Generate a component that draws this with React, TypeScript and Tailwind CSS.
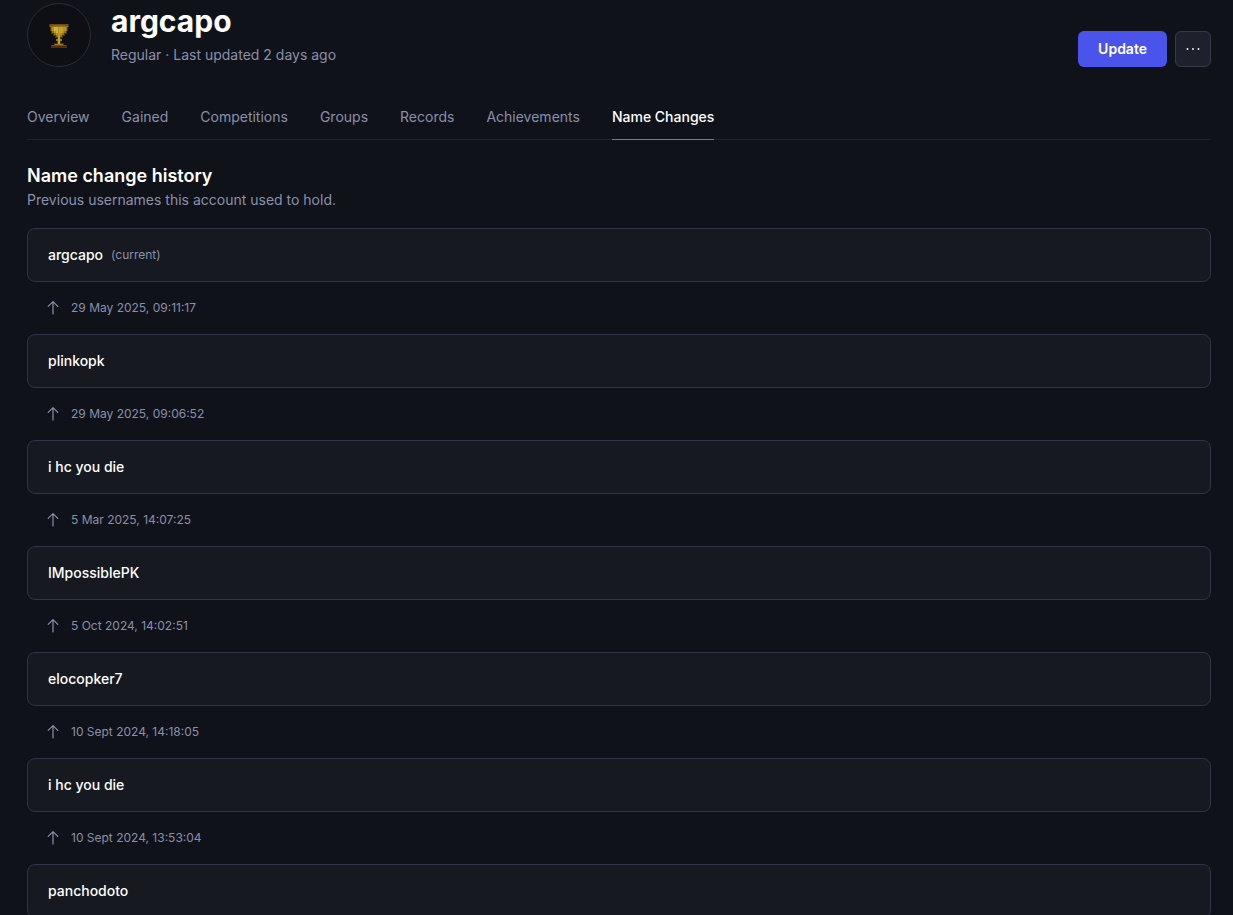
const TABS = [
  'Overview',
  'Gained',
  'Competitions',
  'Groups',
  'Records',
  'Achievements',
  'Name Changes',
];

interface NameEntry {
  name: string;
  changedAt?: string;
}

// Newest first, changedAt is when the name above replaced this one
const HISTORY: NameEntry[] = [
  { name: 'argcapo' },
  { name: 'plinkopk', changedAt: '29 May 2025, 09:11:17' },
  { name: 'i hc you die', changedAt: '29 May 2025, 09:06:52' },
  { name: 'IMpossiblePK', changedAt: '5 Mar 2025, 14:07:25' },
  { name: 'elocopker7', changedAt: '5 Oct 2024, 14:02:51' },
  { name: 'i hc you die', changedAt: '10 Sept 2024, 14:18:05' },
  { name: 'panchodoto', changedAt: '10 Sept 2024, 13:53:04' },
];

function TrophyIcon() {
  return (
    <svg width="20" height="24" viewBox="0 0 20 24" className="mt-0.5" shapeRendering="crispEdges" aria-hidden="true">
      {/* dark outline */}
      <path fill="#4a3510" d="M0 0h20v3h-1v4h-1v3h-2v2h-2v2h-2v5h3v2h3v3H2v-3h3v-2h3v-5H6v-2H4v-2H2V7H1V3H0z" />
      {/* cup */}
      <path fill="#8f7118" d="M1 1h18v2h-1v4h-1v2h-2v2h-2v2h-2v6H9v-6H7v-2H5V9H3V7H2V3H1z" />
      <path fill="#b39224" d="M3 3h14v4h-2v2h-2v2h-2v2H9v-2H7V9H5V7H3z" />
      <path fill="#d0b03c" d="M5 3h4v6H7V7H5z" />
      <path fill="#c4a22c" d="M10 3h4v4h-1v2h-3z" />
      <path fill="#6b4a14" d="M1 0h18v2H1z" />
      <path fill="#8c5f1c" d="M4 1h12v1H4z" />
      {/* stem and foot */}
      <path fill="#c4a22c" d="M9 12h2v8H9z" />
      <path fill="#98761a" d="M7 15h6v2H7z" />
      <path fill="#c4a22c" d="M9 15h2v2H9z" />
      <path fill="#a07a1e" d="M6 20h8v1H6z" />
      <path fill="#7d4a18" d="M3 21h14v2H3z" />
      <path fill="#4e2a10" d="M2 22h16v1H2z" />
    </svg>
  );
}

function ArrowUpIcon() {
  return (
    <svg
      width="16"
      height="16"
      viewBox="0 0 16 16"
      fill="none"
      stroke="currentColor"
      strokeWidth="1.2"
      strokeLinecap="round"
      strokeLinejoin="round"
      aria-hidden="true"
    >
      <path d="M8 14V1.8M3.2 6.4L8 1.6l4.8 4.8" />
    </svg>
  );
}

function PlayerHeader() {
  return (
    <header className="flex items-start justify-between">
      <div className="flex items-start gap-5">
        <div className="flex size-16 shrink-0 items-center justify-center rounded-full border border-[#272b3b] bg-[#0d0f15]">
          <TrophyIcon />
        </div>
        <div>
          <h1 className="text-3xl font-bold text-white">argcapo</h1>
          <p className="mt-1.5 text-sm text-[#8a90ab]">Regular · Last updated 2 days ago</p>
        </div>
      </div>
      <div className="mt-7 flex gap-2">
        <button type="button" className="h-9 rounded-md bg-[#4a54eb] px-5 text-sm font-semibold text-white">
          Update
        </button>
        <button
          type="button"
          aria-label="More options"
          className="flex size-9 items-center justify-center rounded-md border border-[#373a46] bg-[#1e212c] text-white"
        >
          <svg width="16" height="16" viewBox="0 0 16 16" fill="currentColor" aria-hidden="true">
            <circle cx="2.5" cy="8" r="0.9" />
            <circle cx="8" cy="8" r="0.9" />
            <circle cx="13.5" cy="8" r="0.9" />
          </svg>
        </button>
      </div>
    </header>
  );
}

function Tabs() {
  return (
    <nav className="mt-7 flex gap-8 border-b border-[#1f222c] text-sm text-[#8a90ab]">
      {TABS.map((tab) => (
        <a
          key={tab}
          href="#"
          aria-current={tab === 'Name Changes' ? 'page' : undefined}
          className={
            tab === 'Name Changes'
              ? '-mb-px border-b border-[#5b76f5] pt-3 pb-3 font-medium text-white'
              : 'pt-3 pb-3'
          }
        >
          {tab}
        </a>
      ))}
    </nav>
  );
}

export default function App() {
  return (
    <div className="min-h-screen bg-[#0f1219] pt-[3px] pr-[22px] pl-[27px] font-[Inter,sans-serif]">
      <PlayerHeader />
      <Tabs />
      <main className="mt-[22px]">
        <h2 className="text-lg font-semibold text-white">Name change history</h2>
        <p className="text-sm text-[#8a90ab]">Previous usernames this account used to hold.</p>
        <ol className="mt-[18px]">
          {HISTORY.map((entry, i) => (
            <li key={i}>
              {entry.changedAt && (
                <div className="flex h-[52px] items-center gap-2.5 pl-[18px] text-xs text-[#8a90ab]">
                  <ArrowUpIcon />
                  <time>{entry.changedAt}</time>
                </div>
              )}
              <div className="flex h-[54px] items-center gap-2 rounded-lg border border-[#2f3446] bg-[#161920] px-5 text-sm font-medium text-white">
                {entry.name}
                {i === 0 && <span className="text-xs font-normal text-[#8a90ab]">(current)</span>}
              </div>
            </li>
          ))}
        </ol>
      </main>
    </div>
  );
}
